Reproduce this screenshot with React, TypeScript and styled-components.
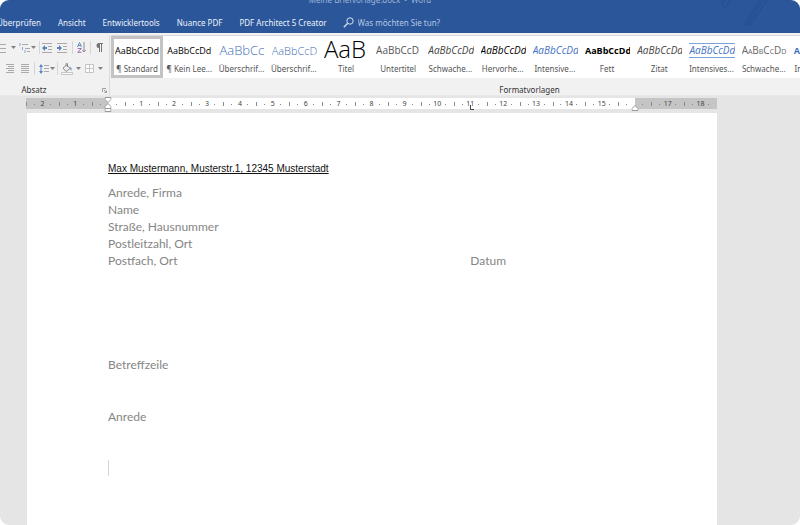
import React from "react";
import styled, { createGlobalStyle, css } from "styled-components";

const GlobalStyle = createGlobalStyle`
  * { box-sizing: border-box; }
  html, body { margin: 0; background: #fff; }
  body { font-family: "Noto Sans", "Open Sans", sans-serif; font-size: 8px; }
  button, input { font: inherit; color: inherit; }
`;

const Window = styled.div`
  display: flex;
  flex-direction: column;
  min-height: 100vh;
  border-radius: 9px;
  overflow: hidden;
  background: #e5e5e5;
`;

const Header = styled.header`
  position: relative;
  height: 33px;
  overflow: hidden;
  background: #2b579a;
  color: #edf2fa;
`;

const TitleBar = styled.div`
  display: flex;
  justify-content: center;
  align-items: flex-end;
  height: 6px;
  padding-right: 60px;
  line-height: 12px;
  white-space: pre;
  color: #9db3d6;
`;

const Swoosh = styled.svg`
  position: absolute;
  top: 0;
  right: 28px;
`;

const TabBar = styled.nav`
  display: flex;
  align-items: center;
  gap: 17px;
  height: 33px;
  margin-left: -3px;
`;

const Tab = styled.button`
  flex: none;
  padding: 0;
  border: 0;
  background: none;
  line-height: 12px;
  white-space: nowrap;
`;

const Search = styled.label`
  display: flex;
  align-items: center;
  gap: 4px;
  margin-left: -1px;
  color: #b5c7e3;

  input {
    width: 120px;
    padding: 0;
    border: 0;
    outline: 0;
    background: none;
    line-height: 12px;
  }
  input::placeholder { color: #b5c7e3; opacity: 1; }
`;

const Ribbon = styled.section`
  display: flex;
  height: 63px;
  padding-top: 2px;
  background: #f1f1f1;
  border-bottom: 1px solid #e9e9e9;
`;

const ParagraphGroup = styled.div`
  display: flex;
  flex-direction: column;
  flex: none;
  width: 110px;
  border-right: 1px solid #dcdcdc;
`;

const ToolRow = styled.div<{ $columns: string }>`
  display: grid;
  grid-template-columns: ${(p) => p.$columns};
  align-items: center;
  justify-items: center;
  height: 21px;

  &:first-child { margin-top: 2px; }
`;

const Tool = styled.button`
  display: flex;
  justify-content: center;
  width: 100%;
  padding: 0;
  border: 0;
  background: none;

  svg { flex: none; display: block; opacity: 0.8; }
`;

const Separator = styled.span`
  width: 1px;
  height: 13px;
  background: #d6d6d6;
`;

const GroupLabel = styled.div`
  display: flex;
  align-items: center;
  justify-content: center;
  height: 12px;
  margin: auto 0 -1px;
  color: #333;
  line-height: 12px;
`;

const LauncherLabel = styled(GroupLabel)`
  display: grid;
  grid-template-columns: 68px 1fr 10px;
  justify-items: center;
`;

const StylesGroup = styled.div`
  display: flex;
  flex-direction: column;
  flex: 1;
  min-width: 0;
  padding-left: 1px;
`;

const StylesLabel = styled(GroupLabel)`
  padding-left: 148px;
`;

const Gallery = styled.div`
  display: flex;
  height: 43px;
  overflow: hidden;
  background: #fff;
  border-top: 1px solid #d8d8d8;
`;

const StyleTile = styled.button<{ $active?: boolean }>`
  display: flex;
  flex-direction: column;
  flex: 0 0 7.58%;
  min-width: 0;
  height: 42px;
  padding: 0;
  border: 3px solid ${(p) => (p.$active ? "#c3c3c3" : "transparent")};
  background: none;
`;

type Look = "plain" | "heading" | "heading2" | "title" | "subtitle" | "subtle" | "emphasis" | "accent" | "strong" | "boxed" | "caps" | "capsBold";

const looks: Record<Look, ReturnType<typeof css>> = {
  plain: css`color: #000;`,
  heading: css`color: #3f6fb5; font-size: 13px; font-weight: 300;`,
  heading2: css`color: #3f6fb5; font-size: 11px; font-weight: 300;`,
  title: css`
    align-items: flex-start;
    height: 23px;
    margin-top: 0;
    color: #000;
    font-size: 24px;
    font-weight: 300;
    line-height: 18px;
  `,
  subtitle: css`color: #555; font-size: 10px;`,
  subtle: css`color: #444; font-size: 10px; font-style: italic;`,
  emphasis: css`color: #000; font-size: 10px; font-style: italic;`,
  accent: css`color: #4472c4; font-size: 10px; font-style: italic;`,
  strong: css`color: #000; font-weight: 700;`,
  boxed: css`color: #4472c4; font-size: 10px; font-style: italic; border-color: #7ea2d8;`,
  caps: css`color: #666; font-size: 10px; font-variant: small-caps;`,
  capsBold: css`color: #4472c4; font-variant: small-caps; font-weight: 700;`,
};

const Preview = styled.span<{ $look: Look }>`
  display: flex;
  align-items: center;
  justify-content: flex-start;
  width: calc(100% - 1px);
  height: 15px;
  margin: 4px 0 0 1px;
  overflow: hidden;
  border: 0 solid transparent;
  border-width: 1px 0;
  font-family: "Open Sans", sans-serif;
  font-size: 9px;
  line-height: 13px;
  text-align: left;
  white-space: nowrap;
  ${(p) => looks[p.$look]}
`;

const StyleName = styled.span`
  width: 100%;
  margin-top: auto;
  color: #555;
  line-height: 12px;
  text-align: center;
  white-space: nowrap;
`;

const Workspace = styled.main`
  display: flex;
  flex-direction: column;
  flex: 1;
  padding: 2px 83px 0 26px;
`;

const Ruler = styled.div`
  position: relative;
  display: flex;
  height: 11px;
  background: linear-gradient(90deg, #c5c5c5 11.9%, #fff 11.9% 88.1%, #c5c5c5 88.1%);
`;

const RulerCell = styled.span`
  flex: 1;
  min-width: 0;
  color: #444;
  font-size: 7px;
  line-height: 12px;
  text-align: center;
  background:
    linear-gradient(#8a8a8a, #8a8a8a) 0 60% / 1px 4px no-repeat,
    linear-gradient(#8a8a8a, #8a8a8a) 25% 60% / 1px 1px no-repeat,
    linear-gradient(#8a8a8a, #8a8a8a) 75% 60% / 1px 1px no-repeat;
`;

const Marker = styled.svg<{ $at: string; $top: string }>`
  position: absolute;
  left: ${(p) => p.$at};
  top: ${(p) => p.$top};
  transform: translateX(-50%);
`;

const Page = styled.article`
  flex: 1;
  margin: 4px 0 0 1px;
  padding: 49px 60px 48px 81px;
  background: #fff;
  color: #858585;
  font-family: Lato, "Open Sans", sans-serif;
  font-size: 12px;
  line-height: 17px;

  p { margin: 0; }
`;

const Sender = styled.p`
  color: #111;
  font-family: "Liberation Sans", Arial, sans-serif;
  font-size: 10px;
  line-height: 14px;
  text-decoration: underline;
`;

const Address = styled.div`
  display: grid;
  grid-template-columns: 66% 1fr;
  align-items: end;
  margin-top: 8px;
`;

const Paragraph = styled.p<{ $space: number }>`
  && { margin-top: ${(p) => p.$space}px; }
`;

const Caret = styled.div`
  width: 1px;
  height: 16px;
  margin-top: 35px;
  background: #d5d5d5;
`;

const DownArrow = ({ label }: { label: string }) => (
  <Tool aria-label={label}>
    <svg width="5" height="3" viewBox="0 0 5 3"><path d="M0 0h5L2.5 3z" fill="#666" /></svg>
  </Tool>
);

const Lines = ({ d }: { d: string }) => <path d={d} stroke="#999" strokeWidth="1" fill="none" />;

const tiles: { look: Look; text: string; name: string }[] = [
  { look: "plain", text: "AaBbCcDd", name: "¶ Standard" },
  { look: "plain", text: "AaBbCcDd", name: "¶ Kein Lee..." },
  { look: "heading", text: "AaBbCc", name: "Überschrif..." },
  { look: "heading2", text: "AaBbCcD", name: "Überschrif..." },
  { look: "title", text: "AaB", name: "Titel" },
  { look: "subtitle", text: "AaBbCcD", name: "Untertitel" },
  { look: "subtle", text: "AaBbCcDd", name: "Schwache..." },
  { look: "emphasis", text: "AaBbCcDd", name: "Hervorhe..." },
  { look: "accent", text: "AaBbCcDd", name: "Intensive..." },
  { look: "strong", text: "AaBbCcDd", name: "Fett" },
  { look: "subtle", text: "AaBbCcDd", name: "Zitat" },
  { look: "boxed", text: "AaBbCcDd", name: "Intensives..." },
  { look: "caps", text: "AaBbCcDd", name: "Schwache..." },
  { look: "capsBold", text: "AaBbCcDd", name: "Intensiver..." },
];

const rulerMarks = ["2", "1", "", ...Array.from({ length: 15 }, (_, i) => String(i + 1)), "", "17", "18"];

export default function App() {
  return (
    <Window>
      <GlobalStyle />
      <Header>
        <TitleBar>Meine Briefvorlage.docx  -  Word</TitleBar>
        <Swoosh width="60" height="28" viewBox="0 0 60 28" fill="none" stroke="#264f90" strokeWidth="1.2" aria-hidden="true">
          <path d="M10 0v4q1 4 4 3l4-7M13 0v3M32 25L48 0M35 25L51 0M38 25L55 0M32 25h6" />
        </Swoosh>
        <TabBar>
          <Tab>Überprüfen</Tab>
          <Tab>Ansicht</Tab>
          <Tab>Entwicklertools</Tab>
          <Tab>Nuance PDF</Tab>
          <Tab>PDF Architect 5 Creator</Tab>
          <Search>
            <svg width="11" height="11" viewBox="0 0 11 11" fill="none" stroke="#d5e0f0" aria-hidden="true">
              <circle cx="7" cy="4" r="3.2" />
              <path d="M4.7 6.3L.8 10.2" strokeWidth="1.3" />
            </svg>
            <input aria-label="Was möchten Sie tun?" placeholder="Was möchten Sie tun?" />
          </Search>
        </TabBar>
      </Header>

      <Ribbon>
        <ParagraphGroup>
          <ToolRow $columns="8px 10px 12px 6px 6px 10px 19px 2px 16px 2px 16px">
            <Tool aria-label="Nummerierung">
              <svg width="8" height="10" viewBox="0 0 8 10"><Lines d="M0 1.5h6M0 5.5h6M0 9.5h6" /></svg>
            </Tool>
            <DownArrow label="Nummerierungsoptionen" />
            <Tool aria-label="Liste mit mehreren Ebenen">
              <svg width="11" height="10" viewBox="0 0 11 10">
                <Lines d="M3 1.5h6M6 5.5h5M8 8.5h3" />
                <path d="M1 0v3M3.500 4v3M6 7v3" stroke="#6d93c6" />
              </svg>
            </Tool>
            <DownArrow label="Listenoptionen" />
            <Separator />
            <Tool aria-label="Einzug verkleinern">
              <svg width="10" height="10" viewBox="0 0 10 10">
                <Lines d="M0 .5h10M6 3.500h4M6 6.500h4M0 9.500h10" />
                <path d="M0 5l3-3v2h2v2H3v2z" fill="#2f6ab5" />
              </svg>
            </Tool>
            <Tool aria-label="Einzug vergrößern">
              <svg width="10" height="10" viewBox="0 0 10 10">
                <Lines d="M0 .5h10M6 3.500h4M6 6.500h4M0 9.500h10" />
                <path d="M5 5L2 2v2H0v2h2v2z" fill="#2f6ab5" />
              </svg>
            </Tool>
            <Separator />
            <Tool aria-label="Sortieren">
              <svg width="9" height="11" viewBox="0 0 9 11" fill="none">
                <path d="M.5 5L2.500.5 4.500 5M1.200 3.500h2.600" stroke="#3c73b9" />
                <path d="M.7 6.500h3.600L.7 10.300h3.800" stroke="#8a4fa0" />
                <path d="M7 0v10M5.300 8L7 10l1.700-2" stroke="#777" />
              </svg>
            </Tool>
            <Separator />
            <Tool aria-label="Alle anzeigen">
              <svg width="7" height="9" viewBox="0 0 7 9">
                <path d="M7 0v1H6v8H5V1H4v8H3V5A2.500 2.500 0 0 1 3 0z" fill="#555" />
              </svg>
            </Tool>
          </ToolRow>
          <ToolRow $columns="20px 10px 8px 12px 5px 4px 16px 6px 16px 6px">
            <Tool aria-label="Rechtsbündig">
              <svg width="8" height="10" viewBox="0 0 8 10"><Lines d="M0 .5h8M2 2.500h6M0 4.500h8M2 6.500h6M0 8.500h8" /></svg>
            </Tool>
            <Tool aria-label="Blocksatz">
              <svg width="8" height="10" viewBox="0 0 8 10"><Lines d="M0 .5h8M0 2.500h8M0 4.500h8M0 6.500h8M0 8.500h8" /></svg>
            </Tool>
            <Separator />
            <Tool aria-label="Zeilenabstand">
              <svg width="10" height="10" viewBox="0 0 10 10">
                <Lines d="M5 1.500h5M5 4.500h5M5 7.500h5" />
                <path d="M2 0l2 3H2.500v4H4L2 10 0 7h1.500V3H0z" fill="#2f6ab5" />
              </svg>
            </Tool>
            <DownArrow label="Abstandsoptionen" />
            <Separator />
            <Tool aria-label="Schattierung">
              <svg width="12" height="12" viewBox="0 0 12 12" fill="none">
                <path d="M2 5l4-3 3 3.500-4 3zM5 3V.7h1.500V4" stroke="#777" />
                <path d="M9 3.500q2 1.500 1.500 4-1.500 0-1.500-4z" fill="#3c73b9" />
                <path d="M.5 9.500h11v2H.5z" fill="#fff" stroke="#bbb" />
              </svg>
            </Tool>
            <DownArrow label="Schattierungsfarben" />
            <Tool aria-label="Rahmen">
              <svg width="9" height="9" viewBox="0 0 9 9" fill="#fff" stroke="#bbb"><path d="M.5.5h8v8h-8zM4.500.5v8M.5 4.500h8" /></svg>
            </Tool>
            <DownArrow label="Rahmenoptionen" />
          </ToolRow>
          <LauncherLabel>
            <span>Absatz</span>
            <span />
            <Tool aria-label="Absatzeinstellungen">
              <svg width="5" height="5" viewBox="0 0 5 5" fill="none" stroke="#888"><path d="M.5 4V.5H4M2 2l2.500 2.500M4.500 2.500v2h-2" /></svg>
            </Tool>
          </LauncherLabel>
        </ParagraphGroup>
        <StylesGroup>
          <Gallery>
            {tiles.map((t, i) => (
              <StyleTile key={i} $active={i === 0}>
                <Preview $look={t.look}>{t.text}</Preview>
                <StyleName>{t.name}</StyleName>
              </StyleTile>
            ))}
          </Gallery>
          <StylesLabel>Formatvorlagen</StylesLabel>
        </StylesGroup>
      </Ribbon>

      <Workspace>
        <Ruler>
          {rulerMarks.map((mark, i) => <RulerCell key={i}>{mark}</RulerCell>)}
          <Marker $at="11.9%" $top="-1px" width="7" height="16" viewBox="0 0 7 16" fill="#fff" stroke="#999" aria-hidden="true">
            <path d="M.5.5h6v2l-3 3-3-3zM3.500 6.500l3 3v2h-6v-2zM.5 11.500h6v3h-6z" />
          </Marker>
          <Marker $at="64.5%" $top="7px" width="4" height="5" viewBox="0 0 4 5" fill="none" stroke="#444" aria-hidden="true">
            <path d="M.5 0v4.500H4" />
          </Marker>
          <Marker $at="88.1%" $top="7px" width="7" height="6" viewBox="0 0 7 6" fill="#fff" stroke="#999" aria-hidden="true">
            <path d="M3.500.5l3 3v2h-6v-2z" />
          </Marker>
        </Ruler>
        <Page>
          <Sender>Max Mustermann, Musterstr.1, 12345 Musterstadt</Sender>
          <Address>
            <div>
              <p>Anrede, Firma</p>
              <p>Name</p>
              <p>Straße, Hausnummer</p>
              <p>Postleitzahl, Ort</p>
              <p>Postfach, Ort</p>
            </div>
            <p>Datum</p>
          </Address>
          <Paragraph $space={87}>Betreffzeile</Paragraph>
          <Paragraph $space={35}>Anrede</Paragraph>
          <Caret />
        </Page>
      </Workspace>
    </Window>
  );
}
